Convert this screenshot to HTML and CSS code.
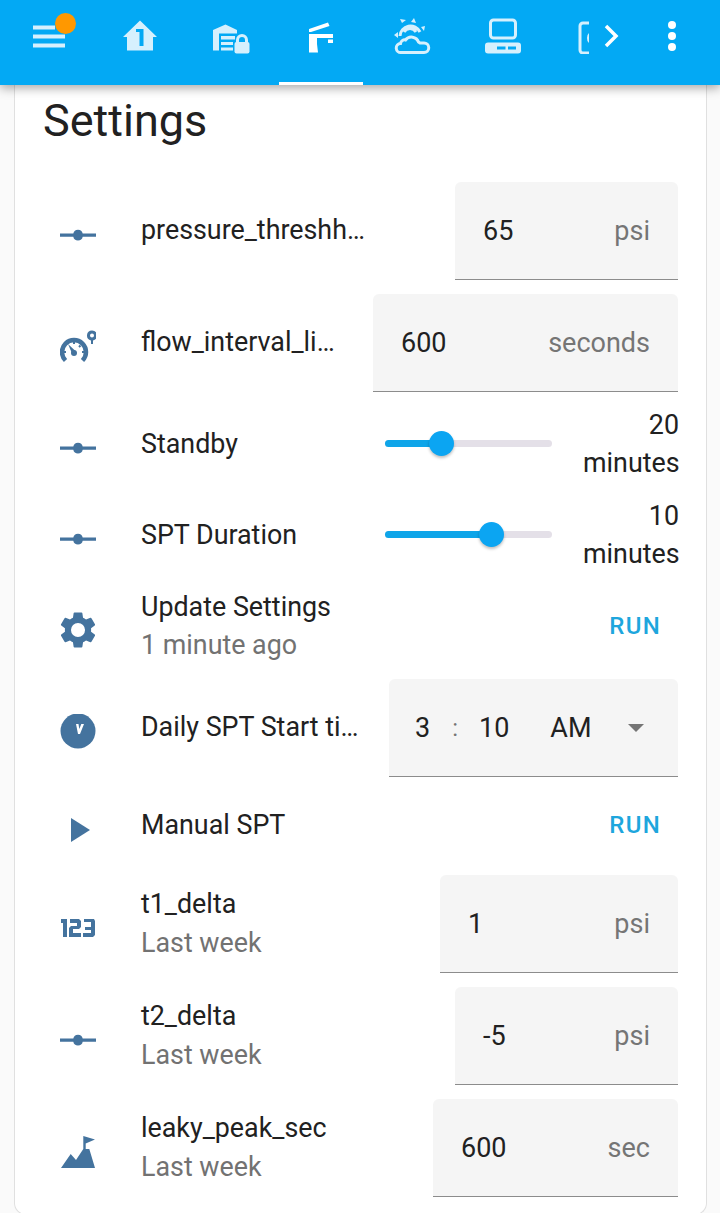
FILE: index.html
```html
<!DOCTYPE html>
<html lang="en">

<head>
    <meta charset="UTF-8">
    <title>Settings</title>
    <link rel="stylesheet" href="styles.css">
</head>

<body>
    <header class="topbar">
        <div class="tab menu">
            <svg width="50" height="40" viewBox="0 0 50 40">
                <path class="pale" d="M3 9.500h22v4H3zM3 18.500h32v4H3zM3 27.500h32v4H3z" />
            </svg>
            <span class="dot"></span>
        </div>
        <div class="tab">
            <svg width="36" height="36" viewBox="0 0 36 36">
                <path class="pale" fill-rule="evenodd" d="M18 2.500 35 19h-4v13.500H5V19H1ZM14 11v3h3.500v14h4V11Z" />
            </svg>
        </div>
        <div class="tab">
            <svg width="40" height="36" viewBox="0 0 40 36">
                <path class="pale" d="M14.500 6.500 26 12v3.500H8v17H2V12ZM10 18h14v3.500H10ZM10 24h12v3H10ZM10 29.500h12v3H10Z" />
                <path class="pale-line" d="M26.500 25v-3a4.500 4.500 0 0 1 9 0v3" />
                <rect class="pale" x="23.500" y="24" width="15" height="11.500" rx="2" />
            </svg>
        </div>
        <div class="tab active">
            <svg width="36" height="36" viewBox="0 0 36 36">
                <path fill="#fff" d="M6 11 25 4.500l1.500 3.500L8 14H6ZM6 16h24v4H14v6l1 8.500H6ZM25 21.500h5V25h-5Z" />
            </svg>
        </div>
        <div class="tab">
            <svg width="38" height="38" viewBox="0 0 38 38">
                <path class="pale-line" d="M8 35.500a4.500 4.500 0 0 1-.5-9c.5-3 3-4 5-3.500a7.500 7.500 0 0 1 13 2l1.500 1h4a4.750 4.750 0 0 1 0 9.500Z" />
                <path class="pale-line" d="M7 19a10.500 10.500 0 0 1 20-4M11 15a7 7 0 0 1 12 0" />
                <path class="pale" d="M7 2l6 1-4 3zM21 1l2 5-5-1zM32 9l-1 5-3-4zM1 18l4-3v6z" />
            </svg>
        </div>
        <div class="tab">
            <svg width="38" height="38" viewBox="0 0 38 38">
                <rect class="pale-line" x="7.500" y="3" width="25" height="18" rx="3" />
                <rect class="pale" x="2" y="25.500" width="36" height="11" rx="3" />
                <path fill="#03a9f4" d="M14 29.500h8.500v3H14zM25 29.500h8v3h-8z" />
            </svg>
        </div>
        <div class="tab cut">
            <svg width="11" height="36" viewBox="0 0 11 36">
                <path class="pale-line" d="M11 5H5a3 3 0 0 0-3 3v24a3 3 0 0 0 3 3h6" />
                <path class="pale" d="M11 15a6 6 0 0 0-2 5 6 6 0 0 0 2 5Z" />
            </svg>
        </div>
        <div class="tab arrow">
            <svg width="20" height="26" viewBox="0 0 20 26">
                <path d="M4 3l10 10L4 23" fill="none" stroke="#fff" stroke-width="3.500" />
            </svg>
        </div>
        <div class="tab more">
            <span></span><span></span><span></span>
        </div>
    </header>

    <main class="card">
        <h1>Settings</h1>

        <div class="row">
            <svg class="icon" viewBox="0 0 36 36"><use href="#slider" /></svg>
            <div class="name trim up">pressure_threshh…</div>
            <div class="field w223"><span>65</span><span class="unit">psi</span></div>
        </div>

        <div class="row">
            <svg class="icon" viewBox="0 0 36 36">
                <path class="ring" d="M5.500 31.500A12 12 0 1 1 22.500 31.500" />
                <path class="ticks" d="M14 13v2M20.500 16.500l-1.500 1.500M24 23h-2M4 23h2" />
                <circle cx="14" cy="24" r="3" />
                <path d="M12.500 25.500 8 15l8 7.500Z" />
                <path fill-rule="evenodd" d="M32 1.500a5 5 0 0 1 1 9.900V15h-2v-3.600a5 5 0 0 1 1-9.900Zm0 3a2 2 0 1 0 0 4 2 2 0 0 0 0-4Z" />
            </svg>
            <div class="name trim up">flow_interval_li…</div>
            <div class="field w305"><span>600</span><span class="unit">seconds</span></div>
        </div>

        <div class="row tall pull">
            <svg class="icon" viewBox="0 0 36 36"><use href="#slider" /></svg>
            <div class="name">Standby</div>
            <div class="track"><div class="fill w33"></div><div class="thumb"></div></div>
            <div class="value">20 minutes</div>
        </div>

        <div class="row tall">
            <svg class="icon" viewBox="0 0 36 36"><use href="#slider" /></svg>
            <div class="name">SPT Duration</div>
            <div class="track"><div class="fill w63"></div><div class="thumb"></div></div>
            <div class="value">10 minutes</div>
        </div>

        <div class="row tall plus">
            <svg class="icon" viewBox="1.750 1.750 20.500 20.500">
                <path fill-rule="evenodd" d="M12 8a4 4 0 1 0 0 8 4 4 0 0 0 0-8Zm7.430 4.980.030-.980-.030-1 2.110-1.630a.500.500 0 0 0 .120-.640l-2-3.460a.500.500 0 0 0-.610-.220l-2.490 1a7 7 0 0 0-1.690-.980l-.380-2.650A.490.490 0 0 0 14 2h-4a.490.490 0 0 0-.490.420l-.380 2.650a7 7 0 0 0-1.690.980l-2.490-1a.500.500 0 0 0-.610.220l-2 3.460a.490.490 0 0 0 .120.640L4.570 11l-.030 1 .030.980-2.110 1.650a.490.490 0 0 0-.120.640l2 3.460c.120.220.390.300.610.220l2.490-1c.520.400 1.060.730 1.690.980l.380 2.650c.030.240.240.420.490.420h4c.250 0 .460-.180.490-.420l.380-2.650a7 7 0 0 0 1.690-.980l2.490 1c.220.080.490 0 .610-.220l2-3.460a.490.490 0 0 0-.120-.640Z" />
            </svg>
            <div class="name">Update Settings<div class="sub">1 minute ago</div></div>
            <a class="run">RUN</a>
        </div>

        <div class="row">
            <svg class="icon" viewBox="0 0 36 36">
                <circle cx="18" cy="17" r="17.500" />
                <path fill="#fff" d="M16 10h2.500l.8 5 2-5H24l-4 10h-2Z" />
            </svg>
            <div class="name trim up">Daily SPT Start ti…</div>
            <div class="field time w289">
                <span class="hh">3</span><span class="colon">:</span><span class="mm">10</span><span class="ampm">AM</span><span class="caret"></span>
            </div>
        </div>

        <div class="row short">
            <svg class="icon" viewBox="0 0 36 36"><path d="M11 6 30 18 11 30Z" /></svg>
            <div class="name up">Manual SPT</div>
            <a class="run up">RUN</a>
        </div>

        <div class="row">
            <svg class="icon" viewBox="0 0 36 36">
                <path d="M1 9h6v18H3V13H1ZM10 9h9l2 2v6l-2 2h-6v4h8v4H9v-9l2-2h6v-3h-7ZM24 9h10l1 2v14l-2 2H23v-4h8v-3h-6v-3h6v-5h-7Z" />
            </svg>
            <div class="name up">t1_delta<div class="sub">Last week</div></div>
            <div class="field w238"><span>1</span><span class="unit">psi</span></div>
        </div>

        <div class="row">
            <svg class="icon" viewBox="0 0 36 36"><use href="#slider" /></svg>
            <div class="name up">t2_delta<div class="sub">Last week</div></div>
            <div class="field w223"><span>-5</span><span class="unit">psi</span></div>
        </div>

        <div class="row">
            <svg class="icon" viewBox="0 0 36 36">
                <path d="M1 34 10.700 20 16 26 23.300 15V2L35 5.500 25.700 9.500V15h3.600L35 34Z" />
            </svg>
            <div class="name up">leaky_peak_sec<div class="sub">Last week</div></div>
            <div class="field w245"><span>600</span><span class="unit">sec</span></div>
        </div>
    </main>

    <svg class="defs" width="0" height="0">
        <symbol id="slider" viewBox="0 0 36 36">
            <path d="M0 16.500h13.300a4.800 4.800 0 0 1 9.400 0H36v3.200H22.700a4.800 4.800 0 0 1-9.400 0H0Z" />
        </symbol>
    </svg>
</body>

</html>
```

FILE: styles.css
```css
* {
    box-sizing: border-box;
}

body {
    margin: 0;
    height: 1213px;
    overflow: hidden;
    background-color: #fafafa;
    color: #212121;
    font-family: Roboto, sans-serif;
    font-size: 26.850px;
}

/* barra de arriba */
.topbar {
    position: relative;
    z-index: 2;
    display: flex;
    gap: 6.500px;
    height: 85px;
    background-color: #03a9f4;
    box-shadow: 0 3px 10px rgba(0, 0, 0, 0.35);
    overflow: hidden;
}

.tab {
    position: relative;
    display: flex;
    flex: none;
    align-items: center;
    justify-content: center;
    width: 84px;
    height: 85px;
    padding-bottom: 14px;
}

.menu {
    width: 91.500px;
    padding-left: 30px;
    justify-content: flex-start;
}

.dot {
    position: absolute;
    top: 13px;
    left: 55px;
    width: 21px;
    height: 21px;
    border-radius: 50%;
    background-color: #ff9800;
}

.active {
    border-bottom: 3px solid #fff;
    padding-bottom: 11px;
}

.cut {
    width: 11px;
    margin-left: 27px;
    justify-content: flex-start;
}

.arrow {
    width: 20px;
    margin-left: 6.500px;
}

.more {
    flex-direction: column;
    gap: 3px;
    width: 8px;
    margin-left: 40px;
}

.more span {
    flex: none;
    width: 8px;
    height: 8px;
    border-radius: 50%;
    background-color: #fff;
}

.pale {
    fill: #d6f0fd;
}

.pale-line {
    fill: none;
    stroke: #d6f0fd;
    stroke-width: 3;
}

/* tarjeta */
.card {
    display: flex;
    flex-direction: column;
    gap: 14px;
    width: 693px;
    height: 1130px;
    margin-left: 14px;
    padding: 0 28px;
    background-color: #fff;
    border: 1px solid #e0e0e0;
    border-top: 0;
    border-radius: 0 0 12px 12px;
}

h1 {
    height: 84px;
    margin: 0 0 -1px;
    padding-top: 5px;
    font-size: 45px;
    font-weight: 400;
    line-height: 62px;
}

.row {
    display: flex;
    align-items: center;
    min-height: 98px;
}

.tall {
    min-height: 77px;
}

.pull {
    margin-top: -1px;
}

.plus {
    min-height: 78px;
}

.short {
    min-height: 70px;
}

.icon {
    flex: none;
    width: 36px;
    height: 36px;
    margin: 8px 45px 0 17px;
    fill: #44739e;
}

.ring {
    fill: none;
    stroke: #44739e;
    stroke-width: 4.500;
}

.ticks {
    fill: none;
    stroke: #44739e;
    stroke-width: 2;
}

.name {
    flex: 1;
    min-width: 0;
    line-height: 38px;
    white-space: nowrap;
}

.trim {
    overflow: hidden;
    padding-right: 8px;
}

.up {
    margin-bottom: 2px;
}

.sub {
    color: #727272;
}

.up .sub {
    margin: 1px 0 -1px;
}

.field {
    display: flex;
    flex: none;
    align-items: center;
    justify-content: space-between;
    height: 98px;
    padding: 0 28px;
    background-color: #f5f5f5;
    border-bottom: 1px solid #8c8c8c;
    border-radius: 6px 6px 0 0;
    font-size: 27px;
}

.unit {
    color: #757575;
}

.w223 {
    width: 223px;
}

.w238 {
    width: 238px;
}

.w245 {
    width: 245px;
}

.w289 {
    width: 289px;
}

.w305 {
    width: 305px;
}

.time {
    justify-content: flex-start;
    padding: 0 0 0 26px;
}

.colon {
    margin-left: 22px;
    color: #757575;
    font-size: 24px;
}

.mm {
    margin-left: 21px;
}

.ampm {
    margin-left: 41px;
}

.caret {
    width: 0;
    height: 0;
    margin-left: 36px;
    border-top: 8px solid #757575;
    border-left: 8px solid transparent;
    border-right: 8px solid transparent;
}

/* sliders */
.track {
    position: relative;
    flex: none;
    display: flex;
    align-items: center;
    width: 167px;
    height: 7px;
    margin-right: 31px;
    background-color: #e4e0e8;
    border-radius: 4px;
}

.fill {
    height: 7px;
    background-color: #0ea5e9;
    border-radius: 4px 0 0 4px;
}

.w33 {
    width: 33.500%;
}

.w63 {
    width: 63.500%;
}

.thumb {
    flex: none;
    width: 25px;
    height: 25px;
    margin-left: -12px;
    border-radius: 50%;
    background-color: #0ba5f2;
    box-shadow: 0 2px 3px rgba(0, 0, 0, 0.25);
}

.value {
    flex: none;
    width: 96px;
    margin-right: -1px;
    line-height: 38px;
    text-align: right;
}

.run {
    margin-right: 17px;
    color: #1ea6dd;
    font-size: 24px;
    font-weight: 500;
    letter-spacing: 1.300px;
}

.defs {
    position: absolute;
}
```
